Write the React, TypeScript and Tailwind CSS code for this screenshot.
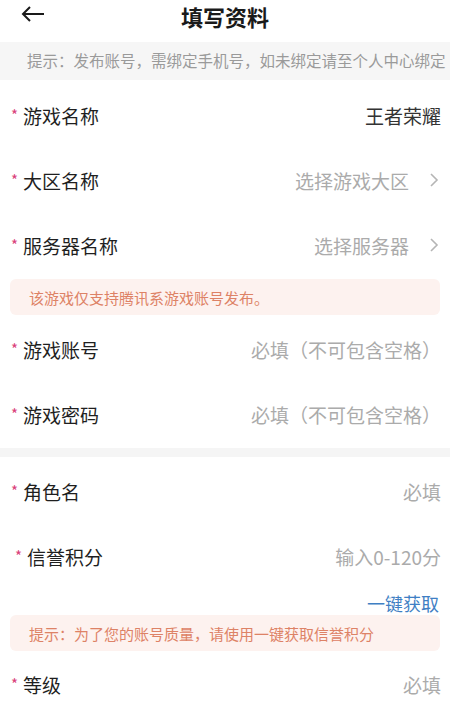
import React from 'react'

interface RowProps {
  label: string
  value: string
  filled?: boolean
  arrow?: boolean
  shift?: boolean
}

const Row: React.FC<RowProps> = ({ label, value, filled, arrow, shift }) => (
  <div className={`h-[65px] flex items-center justify-between pr-[9px] pb-[3px] ${shift ? 'pl-[15px]' : 'pl-[11px]'}`}>
    <div className="flex items-start">
      <span className="text-[15px] leading-none text-[#d9407a] mt-[1px] mr-[5px]">*</span>
      <span className="text-[19px] leading-none text-[#1f1f1f]">{label}</span>
    </div>
    <div className="flex items-center">
      <span className={`text-[19px] leading-none ${filled ? 'text-[#333]' : 'text-[#ababab]'}`}>{value}</span>
      {arrow && (
        <svg width="10" height="16" viewBox="0 0 10 16" className="ml-[20px] mr-[2px]">
          <path d="M2 2 L8 8 L2 14" fill="none" stroke="#b5b5b5" strokeWidth="1.6" />
        </svg>
      )}
    </div>
  </div>
)

const Notice: React.FC<{ text: string }> = ({ text }) => (
  <div className="mx-[10px] h-[36px] rounded-[6px] bg-[#fdf2ef] flex items-center pl-[19px]">
    <span className="text-[15px] leading-none text-[#dd8266]">{text}</span>
  </div>
)

export default function App() {
  return (
    <div
      className="w-[450px] h-[706px] overflow-hidden bg-white"
      style={{ fontFamily: '"Noto Sans CJK SC", "Noto Sans", sans-serif' }}
    >
      {/* Header */}
      <div className="relative h-[42px] flex items-start justify-center pt-[4px]">
        <svg width="24" height="18" viewBox="0 0 24 18" className="absolute left-[21px] top-[5px]">
          <path d="M9 2 L2 9 L9 16 M2 9 L23 9" fill="none" stroke="#1a1a1a" strokeWidth="2" />
        </svg>
        <span className="text-[22px] font-bold text-[#1a1a1a] leading-[24px]">填写资料</span>
      </div>

      {/* Tip bar */}
      <div className="h-[38px] bg-[#f6f6f6] flex items-center pl-[27px] whitespace-nowrap overflow-hidden">
        <span className="text-[15.5px] leading-none text-[#9a9a9a]">提示：发布账号，需绑定手机号，如未绑定请至个人中心绑定</span>
      </div>

      <div className="pt-[4px]">
        <Row label="游戏名称" value="王者荣耀" filled />
        <Row label="大区名称" value="选择游戏大区" arrow />
        <Row label="服务器名称" value="选择服务器" arrow />
      </div>

      <Notice text="该游戏仅支持腾讯系游戏账号发布。" />

      <div className="pt-[3px]">
        <Row label="游戏账号" value="必填（不可包含空格）" />
        <Row label="游戏密码" value="必填（不可包含空格）" />
      </div>

      <div className="h-[9px] bg-[#f5f5f5]" />

      <div className="pt-[3px]">
        <Row label="角色名" value="必填" />
        <Row label="信誉积分" value="输入0-120分" shift />
      </div>

      <div className="h-[25px] flex items-center justify-end pr-[11px]">
        <span className="text-[18px] leading-none text-[#3f7fc4]">一键获取</span>
      </div>

      <Notice text="提示：为了您的账号质量，请使用一键获取信誉积分" />

      <div className="pt-[2px]">
        <Row label="等级" value="必填" />
      </div>
    </div>
  )
}
